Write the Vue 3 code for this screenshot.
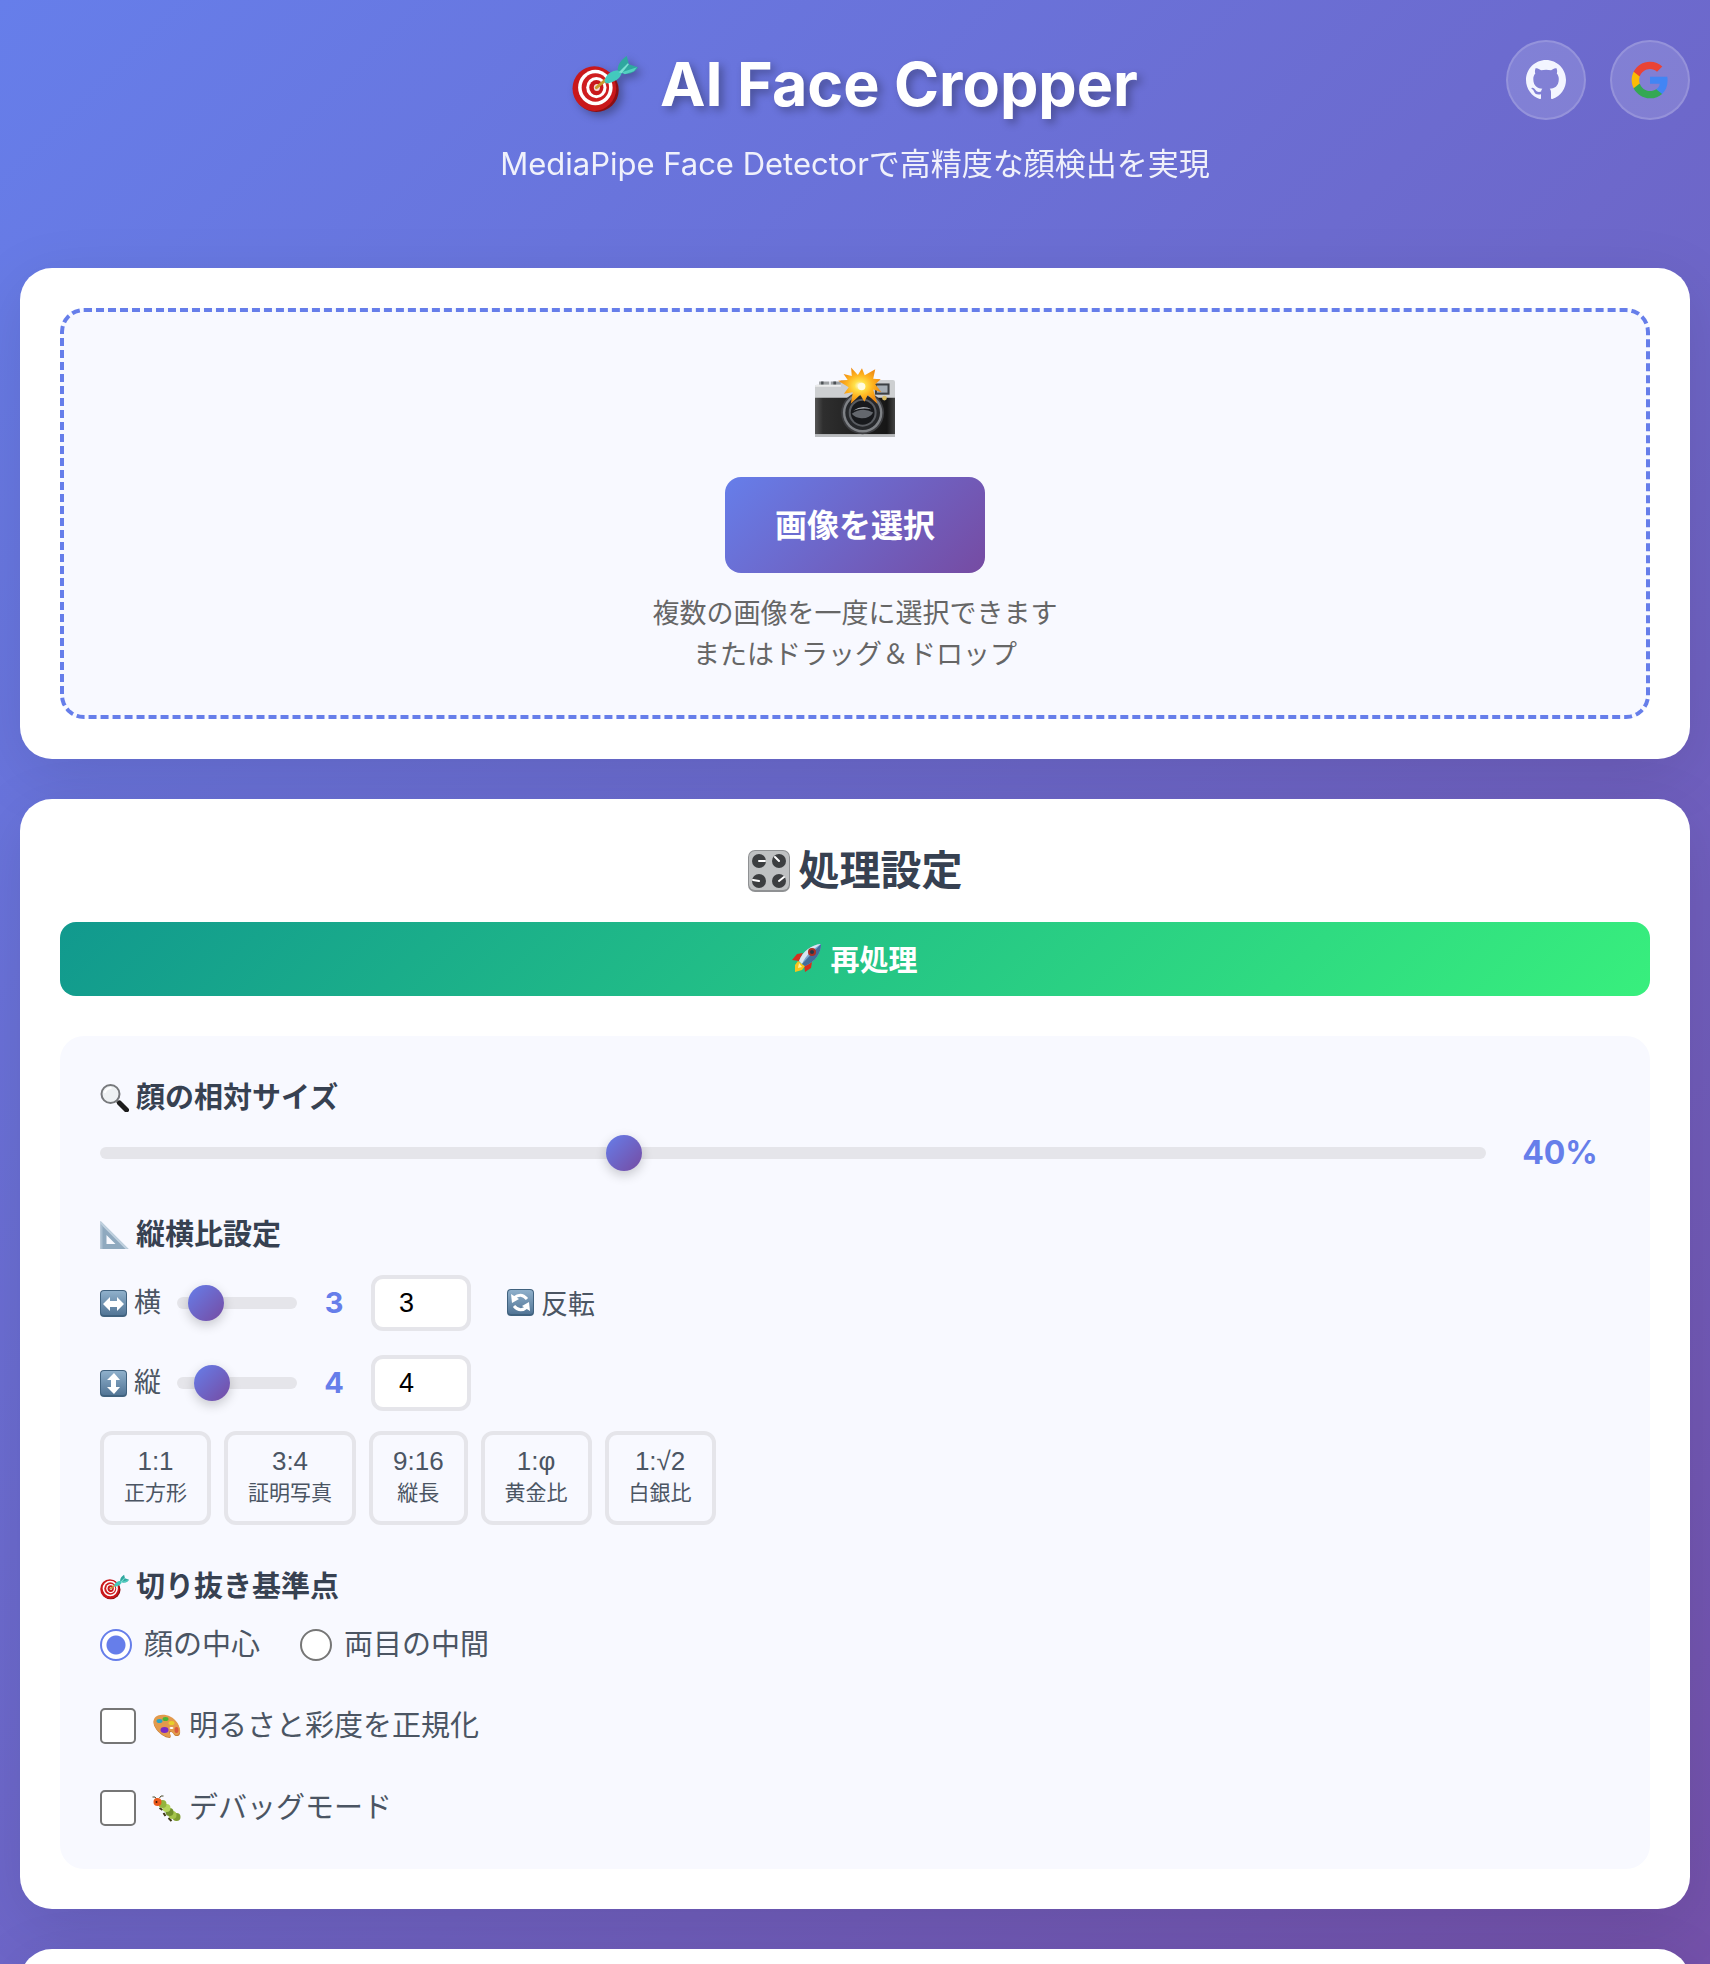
<script setup>
import { ref } from 'vue'

const faceSize = ref(40)
const ratioW = ref(3)
const ratioH = ref(4)
const anchor = ref('center')
const normalize = ref(false)
const debug = ref(false)

const presets = [
  { ratio: '1:1', name: '正方形', w: 1, h: 1 },
  { ratio: '3:4', name: '証明写真', w: 3, h: 4 },
  { ratio: '9:16', name: '縦長', w: 9, h: 16 },
  { ratio: '1:φ', name: '黄金比', w: 1, h: 1.618 },
  { ratio: '1:√2', name: '白銀比', w: 1, h: 1.414 },
]

function applyPreset(p) {
  ratioW.value = p.w
  ratioH.value = p.h
}

function swap() {
  const w = ratioW.value
  ratioW.value = ratioH.value
  ratioH.value = w
}
</script>

<template>
  <svg class="sprite" width="0" height="0" aria-hidden="true">
    <defs>
      <linearGradient id="key" x1="0" y1="0" x2="0" y2="1">
        <stop offset="0" stop-color="#8fb0cb" />
        <stop offset="1" stop-color="#527596" />
      </linearGradient>
      <symbol id="target" viewBox="0 0 65 55">
        <ellipse cx="24" cy="33.500" rx="22" ry="21.500" fill="#8c0f12" />
        <ellipse cx="22" cy="32" rx="21.500" ry="22" fill="#c9181b" />
        <ellipse cx="23" cy="31" rx="17" ry="17.500" fill="#fff" />
        <ellipse cx="23" cy="31" rx="13.500" ry="14" fill="#cf1d1f" />
        <ellipse cx="24" cy="31" rx="10" ry="10.500" fill="#fff" />
        <ellipse cx="24" cy="31" rx="7" ry="7.500" fill="#c9181b" />
        <ellipse cx="24.500" cy="31" rx="3" ry="3.500" fill="#f3d9d6" />
        <path d="M24 31 35 22" stroke="#c99b2c" stroke-width="3" stroke-linecap="round" />
        <path d="M32 25c1-7 7-11 14-11l3 2c-1 6-7 10-15 11z" fill="#43c9bd" />
        <path d="M45 14C45 8 49 3 54 0l2 8 9 3c-3 5-9 8-16 6z" fill="#2fa79f" />
        <path d="m46 16 9-9 1 1-7 9z" fill="#7be0d3" />
        <path d="m49 16 15-5-3 4-9 3z" fill="#55cfc2" />
      </symbol>
    </defs>
  </svg>

  <div class="page">
    <header class="hero">
      <div class="heading">
        <h1>
          <svg class="hero-icon" aria-hidden="true"><use href="#target" /></svg>
          <span>AI Face Cropper</span>
        </h1>
        <p>MediaPipe Face Detectorで高精度な顔検出を実現</p>
      </div>
      <nav class="links">
        <a href="#github" aria-label="GitHub">
          <svg viewBox="0 0 16 16" fill="#f3f5ff">
            <path d="M8 0C3.580 0 0 3.580 0 8c0 3.540 2.290 6.530 5.470 7.590.4.070.55-.17.55-.38 0-.19-.01-.82-.01-1.490-2.010.37-2.530-.49-2.690-.94-.09-.23-.48-.94-.82-1.130-.28-.15-.68-.52-.01-.53.63-.01 1.080.58 1.230.82.72 1.210 1.870.87 2.330.66.07-.52.28-.87.51-1.070-1.780-.2-3.640-.89-3.640-3.950 0-.87.31-1.590.82-2.150-.08-.2-.36-1.020.08-2.120 0 0 .67-.21 2.200.82.64-.18 1.320-.27 2-.27s1.360.09 2 .27c1.530-1.040 2.200-.82 2.200-.82.44 1.100.16 1.920.08 2.120.51.56.82 1.270.82 2.150 0 3.070-1.870 3.750-3.650 3.950.29.25.54.73.54 1.480 0 1.070-.01 1.930-.01 2.200 0 .21.15.46.55.38A8.010 8.010 0 0 0 16 8c0-4.420-3.580-8-8-8z" />
          </svg>
        </a>
        <a href="#google" aria-label="Google">
          <svg viewBox="0 0 24 24">
            <path fill="#4285f4" d="M22.560 12.250c0-.78-.07-1.530-.2-2.250H12v4.260h5.920c-.26 1.370-1.040 2.530-2.210 3.310v2.770h3.570c2.080-1.920 3.280-4.740 3.280-8.090z" />
            <path fill="#34a853" d="M12 23c2.970 0 5.460-.98 7.280-2.660l-3.570-2.770c-.98.66-2.230 1.060-3.710 1.060-2.860 0-5.290-1.930-6.160-4.530H2.180v2.840C3.990 20.530 7.700 23 12 23z" />
            <path fill="#fbbc05" d="M5.840 14.090c-.22-.66-.35-1.360-.35-2.090s.13-1.430.35-2.090V7.070H2.180C1.430 8.550 1 10.220 1 12s.43 3.450 1.180 4.930l3.660-2.840z" />
            <path fill="#ea4335" d="M12 5.380c1.620 0 3.060.56 4.210 1.640l3.150-3.150C17.450 2.090 14.970 1 12 1 7.700 1 3.990 3.470 2.180 7.070l3.660 2.840c.87-2.600 3.300-4.530 6.160-4.530z" />
          </svg>
        </a>
      </nav>
    </header>

    <main>
      <section class="card">
        <div class="dropzone">
          <svg class="camera" viewBox="0 0 235 205" aria-hidden="true">
            <defs>
              <linearGradient id="body" x1="0" x2="1" y1="0" y2="0">
                <stop offset="0" stop-color="#555" />
                <stop offset=".1" stop-color="#2e2e2e" />
                <stop offset=".9" stop-color="#161616" />
                <stop offset="1" stop-color="#444" />
              </linearGradient>
              <radialGradient id="burst" cx=".5" cy=".5" r=".5">
                <stop offset="0" stop-color="#fff" />
                <stop offset=".25" stop-color="#ffe14a" />
                <stop offset=".6" stop-color="#ffb41f" />
                <stop offset="1" stop-color="#ef8a12" />
              </radialGradient>
            </defs>
            <path d="M12 42h30v14H12zM46 42h30v14H46z" fill="#9da0a3" />
            <path d="M18 42h7v14h-7zM54 42h8v14h-8z" fill="#4c5054" />
            <path d="M0 58q0-6 6-6h70V38h153q6 0 6 6v50H0z" fill="#cdcfd1" />
            <path d="M0 58q0-6 6-6h70v6z" fill="#eceded" />
            <path d="M0 90h235v108H0z" fill="url(#body)" />
            <path d="M0 197h235v8H0z" fill="#b9bbbe" />
            <rect x="176" y="48" width="43" height="33" fill="#3c4044" />
            <rect x="182" y="54" width="31" height="21" fill="#a5adb4" />
            <circle cx="204" cy="91" r="7" fill="#d9bd63" />
            <circle cx="140" cy="134" r="63" fill="#3c3d40" />
            <circle cx="140" cy="134" r="58" fill="#7f8286" />
            <circle cx="140" cy="134" r="51" fill="#26282b" />
            <circle cx="140" cy="134" r="41" fill="#595c61" />
            <circle cx="140" cy="134" r="35" fill="#17191c" />
            <path d="M108 137q30-22 63-4-10 18-35 17-18-1-28-13z" fill="#63676d" />
            <path d="M112 128q26-19 54-4-28-6-54 4z" fill="#a4a8ae" />
            <path d="m106 1 20 22 12-20 8 21 31-18-6 28 22 2-16 14 18 24-24-8 12 42-28-26-10 20-12-21-28 27 6-34-26 4 14-19-31-19 28-2-12-18 24 6z" fill="url(#burst)" />
            <circle cx="137" cy="57" r="11" fill="#fffbe0" />
          </svg>
          <button type="button" class="pick">画像を選択</button>
          <p>複数の画像を一度に選択できます<br />またはドラッグ＆ドロップ</p>
        </div>
      </section>

      <section class="card">
        <h2>
          <svg viewBox="0 0 42 42" aria-hidden="true">
            <rect width="42" height="42" rx="7" fill="#8f9193" />
            <rect x="1" y="1" width="40" height="39" rx="6" fill="#bfc1c2" />
            <g fill="#3c3e40">
              <circle cx="11" cy="11" r="7" /><circle cx="31" cy="11" r="7" />
              <circle cx="11" cy="31" r="7" /><circle cx="31" cy="31" r="7" />
            </g>
            <path d="M11 11h6M31 11l-4-4M11 31l-6-1M31 31l5-4" stroke="#fff" stroke-width="2" stroke-linecap="round" />
          </svg>
          <span>処理設定</span>
        </h2>
        <button type="button" class="run">
          <svg viewBox="0 0 30 28" aria-hidden="true">
            <path d="m11 9-6 1-5 6 7 1z" fill="#d5301f" />
            <path d="m20 18-1 6-6 4-1-8z" fill="#d5301f" />
            <path d="M6 17 3 21l0 7 7-2 3-4z" fill="#f7c51e" />
            <path d="m7 19-1 5 4-1z" fill="#fff3a0" />
            <path d="M7 17C11 7 19 1 29 0c0 9-5 17-16 22z" fill="#7ba6cf" />
            <path d="M7 17C11 7 19 1 29 0 21 5 14 11 10 20z" fill="#d8e6f1" />
            <path d="m10 20 19-20c0 9-5 17-16 22z" fill="#426d9c" />
            <circle cx="20" cy="8" r="4" fill="#a83024" />
            <circle cx="20" cy="8" r="2" fill="#27364a" />
          </svg>
          <span>再処理</span>
        </button>

        <div class="panel">
          <div class="group">
            <label class="label" for="face-size">
              <svg viewBox="0 0 28 28" aria-hidden="true">
                <path d="m16 17 4 3" stroke="#888" stroke-width="3" />
                <path d="m19 19 7 7" stroke="#1c1c1c" stroke-width="5" stroke-linecap="round" />
                <circle cx="10" cy="10" r="9" fill="#eef1f3" stroke="#77797c" stroke-width="2" />
                <path d="M4 9q2-5 7-5" fill="none" stroke="#fff" stroke-width="2" />
              </svg>
              <span>顔の相対サイズ</span>
            </label>
            <div class="slider-row">
              <input id="face-size" v-model.number="faceSize" type="range" min="10" max="90" />
              <output for="face-size" class="percent">{{ faceSize }}%</output>
            </div>
          </div>

          <div class="group">
            <h3 class="label">
              <svg viewBox="0 0 28 28" aria-hidden="true">
                <path fill-rule="evenodd" d="M0 0 28 28H0zM6 14v9h9z" fill="#8fa9bf" />
                <path d="M0 0 28 28h-3L0 3z" fill="#bfd0de" />
                <path d="M0 3v25h2V5z" fill="#a9bed0" />
              </svg>
              <span>縦横比設定</span>
            </h3>
            <div class="ratio-row">
              <label for="ratio-w">
                <svg viewBox="0 0 27 27" aria-hidden="true">
                  <rect width="27" height="27" rx="4" fill="#40627f" />
                  <rect x="1" y="1" width="25" height="24" rx="3" fill="url(#key)" />
                  <path d="m3 14 7-7v4h7V7l7 7-7 7v-4h-7v4z" fill="#fff" />
                </svg>
                <span>横</span>
              </label>
              <input id="ratio-w" v-model.number="ratioW" type="range" min="1" max="16" />
              <output for="ratio-w">{{ ratioW }}</output>
              <input v-model.number="ratioW" type="number" aria-label="横" />
              <button type="button" class="swap" @click="swap">
                <svg viewBox="0 0 27 27" aria-hidden="true">
                  <rect width="27" height="27" rx="4" fill="#40627f" />
                  <rect x="1" y="1" width="25" height="24" rx="3" fill="url(#key)" />
                  <path d="M7 9q7-6 13 1M20 18q-7 6-13-1" fill="none" stroke="#fff" stroke-width="3" />
                  <path d="m4 5 1 9 7-4zM23 22l-1-9-7 4z" fill="#fff" />
                </svg>
                <span>反転</span>
              </button>
            </div>
            <div class="ratio-row">
              <label for="ratio-h">
                <svg viewBox="0 0 27 27" aria-hidden="true">
                  <rect width="27" height="27" rx="4" fill="#40627f" />
                  <rect x="1" y="1" width="25" height="24" rx="3" fill="url(#key)" />
                  <path d="m14 3 6 7h-4v7h4l-6 7-7-7h4v-7H7z" fill="#fff" />
                </svg>
                <span>縦</span>
              </label>
              <input id="ratio-h" v-model.number="ratioH" type="range" min="1" max="16" />
              <output for="ratio-h">{{ ratioH }}</output>
              <input v-model.number="ratioH" type="number" aria-label="縦" />
            </div>
            <div class="presets">
              <button v-for="p in presets" :key="p.ratio" type="button" @click="applyPreset(p)">
                {{ p.ratio }}<small>{{ p.name }}</small>
              </button>
            </div>
          </div>

          <div class="group">
            <h3 class="label">
              <svg aria-hidden="true"><use href="#target" /></svg>
              <span>切り抜き基準点</span>
            </h3>
            <div class="radios">
              <label><input v-model="anchor" type="radio" name="anchor" value="center" />顔の中心</label>
              <label><input v-model="anchor" type="radio" name="anchor" value="eyes" />両目の中間</label>
            </div>
          </div>

          <label class="check">
            <input v-model="normalize" type="checkbox" />
            <svg viewBox="0 0 28 28" aria-hidden="true">
              <path d="M3 6C8 2 19 3 25 12c4 7 3 12 0 12-4 1-4-5-7-4-2 1 2 5-1 6C10 26-4 13 3 6z" fill="#c67d35" />
              <path d="M3 5C8 1 19 2 25 11c4 7 3 11 0 12-4 1-5-5-8-4-2 1 3 5 0 6C10 26-4 12 3 5z" fill="#e29a4c" />
              <ellipse cx="7" cy="9" rx="3" ry="2" fill="#2aa4c4" />
              <ellipse cx="13" cy="7" rx="3" ry="2" fill="#47b535" />
              <ellipse cx="19" cy="11" rx="3" ry="2" fill="#e8cf2b" />
              <ellipse cx="12" cy="18" rx="4" ry="3" fill="#7a2bc4" />
              <ellipse cx="24" cy="18" rx="2" ry="3" fill="#d8583e" />
              <ellipse cx="19" cy="16" rx="2" ry="1" fill="#fff" />
            </svg>
            <span>明るさと彩度を正規化</span>
          </label>
          <label class="check">
            <input v-model="debug" type="checkbox" />
            <svg viewBox="0 0 28 28" aria-hidden="true">
              <path d="M4 5Q3 2 0 3M7 4q1-3 4-2" fill="none" stroke="#4b4a2a" stroke-width="1" />
              <path d="m7 14 3 2M11 19l2 3M16 24l3 3" stroke="#3c3417" stroke-width="2" />
              <circle cx="24" cy="23" r="4" fill="#7f9e31" />
              <circle cx="20" cy="21" r="4" fill="#a4c44b" />
              <circle cx="17" cy="18" r="4" fill="#71902c" />
              <circle cx="14" cy="14" r="4" fill="#b4d35b" />
              <circle cx="10" cy="10" r="4" fill="#93b33e" />
              <circle cx="5" cy="8" r="4" fill="#ec5a1c" />
              <circle cx="4" cy="8" r="1" fill="#3b1608" />
            </svg>
            <span>デバッグモード</span>
          </label>
        </div>
      </section>

      <section class="card results"></section>
    </main>
  </div>
</template>

<style>
body {
  margin: 0;
}
</style>

<style scoped>
* {
  box-sizing: border-box;
}

.sprite {
  position: absolute;
}

.page {
  height: 100vh;
  overflow: hidden;
  padding: 0 20px;
  background: linear-gradient(135deg, #667eea 0%, #764ba2 100%) 0 0 / 100% 125%;
  color: #374151;
  font-family: Inter, "Noto Sans CJK JP", sans-serif;
  font-size: 29px;
  line-height: 40px;
}

h1, h2, h3, p {
  margin: 0;
}

button, input {
  font-family: inherit;
}

button {
  cursor: pointer;
}

svg {
  flex: none;
  display: block;
}

.hero {
  display: grid;
  grid-template-columns: 1fr auto 1fr;
  align-items: start;
  padding: 40px 0 80px;
}

.heading {
  grid-column: 2;
  text-align: center;
  color: #fff;
}

h1 {
  display: flex;
  justify-content: center;
  align-items: center;
  gap: 22px;
  height: 88px;
  font-size: 61px;
  line-height: 88px;
  font-weight: 700;
  text-shadow: 4px 4px 8px rgba(0, 0, 0, 0.3);
}

.hero-icon {
  width: 66px;
  height: 56px;
  filter: drop-shadow(4px 4px 4px rgba(0, 0, 0, 0.3));
}

.heading p {
  margin-top: 12px;
  font-size: 31px;
  line-height: 48px;
  opacity: 0.9;
}

.links {
  display: flex;
  justify-content: flex-end;
  gap: 24px;
}

.links a {
  display: grid;
  place-items: center;
  width: 80px;
  height: 80px;
  border: 2px solid rgba(255, 255, 255, 0.15);
  border-radius: 50%;
  background: rgba(255, 255, 255, 0.15);
}

.links svg {
  width: 40px;
  height: 40px;
}

main {
  display: flex;
  flex-direction: column;
  gap: 40px;
}

.card {
  padding: 40px;
  border-radius: 32px;
  background: #fff;
  box-shadow: 0 16px 64px rgba(0, 0, 0, 0.1);
}

.results {
  min-height: 400px;
}

.dropzone {
  display: flex;
  flex-direction: column;
  align-items: center;
  padding: 55px 40px 40px;
  border: 4px dashed #667eea;
  border-radius: 24px;
  background: #f8f9ff;
}

.camera {
  width: 80px;
  height: 70px;
}

.pick {
  height: 96px;
  margin: 40px 0 20px;
  padding: 0 50px 4px;
  border: 0;
  border-radius: 16px;
  background: linear-gradient(135deg, #667eea, #764ba2);
  color: #fff;
  font-size: 32px;
  font-weight: 700;
}

.dropzone p {
  color: #666;
  font-size: 27px;
  line-height: 41px;
  text-align: center;
}

h2 {
  display: flex;
  justify-content: center;
  align-items: center;
  gap: 9px;
  margin-bottom: 20px;
  font-size: 41px;
  line-height: 63px;
  font-weight: 700;
}

h2 svg {
  width: 42px;
  height: 42px;
}

.run {
  display: flex;
  justify-content: center;
  align-items: center;
  gap: 8px;
  width: 100%;
  height: 74px;
  margin-bottom: 40px;
  padding: 0 0 2px;
  border: 0;
  border-radius: 16px;
  background: linear-gradient(135deg, #11998e, #38ef7d);
  color: #fff;
  font-size: 29px;
  font-weight: 700;
}

.run svg {
  width: 30px;
  height: 28px;
}

.panel {
  display: flex;
  flex-direction: column;
  gap: 40px;
  padding: 40px;
  border-radius: 24px;
  background: #f8f9ff;
}

.label {
  display: flex;
  align-items: center;
  gap: 7px;
  font-size: 29px;
  line-height: 43px;
  font-weight: 700;
}

.label svg {
  width: 29px;
  height: 28px;
}

.slider-row {
  display: flex;
  align-items: center;
  gap: 24px;
  height: 40px;
  margin-top: 14px;
}

.slider-row input {
  flex: 1;
}

output {
  color: #667eea;
  font-weight: 700;
  text-align: center;
}

.percent {
  width: 100px;
  font-size: 32px;
}

input[type="range"] {
  appearance: none;
  height: 12px;
  margin: 0;
  border-radius: 6px;
  background: #e5e5ea;
}

input[type="range"]::-webkit-slider-thumb {
  appearance: none;
  width: 36px;
  height: 36px;
  border-radius: 50%;
  background: linear-gradient(135deg, #667eea, #764ba2);
  box-shadow: 0 4px 12px rgba(0, 0, 0, 0.2);
}

.ratio-row {
  display: flex;
  align-items: center;
  height: 56px;
  margin: 19px 0 24px;
  color: #4b5563;
  font-size: 27px;
}

.ratio-row + .ratio-row {
  margin-bottom: 20px;
}

.ratio-row label,
.swap {
  display: flex;
  align-items: center;
  gap: 7px;
}

.ratio-row svg {
  width: 27px;
  height: 27px;
}

.ratio-row input[type="range"] {
  width: 120px;
  margin: 0 12px 0 16px;
}

.ratio-row output {
  width: 50px;
  font-size: 29px;
}

.ratio-row input[type="number"] {
  width: 100px;
  height: 56px;
  margin-left: 12px;
  padding: 0 0 0 24px;
  border: 4px solid #e5e5ea;
  border-radius: 12px;
  background: #fff;
  color: #000;
  font-family: "Liberation Sans", sans-serif;
  font-size: 27px;
}

.swap {
  margin-left: 36px;
  padding: 0 0 2px;
  border: 0;
  background: none;
  color: #4b5563;
  font-size: 27px;
}

.presets {
  display: flex;
  gap: 13px;
}

.presets button {
  height: 94px;
  padding: 0 20px 2px;
  border: 4px solid #e5e5ea;
  border-radius: 12px;
  background: #f8f9ff;
  color: #4b5563;
  font-family: "Liberation Sans", "Noto Sans CJK JP", sans-serif;
  font-size: 26px;
  line-height: 31px;
}

.presets small {
  display: block;
  font-size: 21px;
}

.radios {
  display: flex;
  gap: 40px;
  height: 41px;
  margin-top: 16px;
  color: #4b5563;
}

.radios label {
  display: flex;
  align-items: center;
  gap: 12px;
}

.radios input,
.check input {
  appearance: none;
  width: 32px;
  height: 32px;
  margin: 0;
  padding: 4px;
  border: 2px solid #767676;
  border-radius: 50%;
  background-color: #fff;
}

.radios input:checked {
  border-color: #667eea;
  background: radial-gradient(circle, #667eea 9px, #fff 10px);
}

.check {
  display: flex;
  align-items: center;
  gap: 8px;
  height: 42px;
  color: #4b5563;
}

.check input {
  width: 36px;
  height: 36px;
  margin-right: 8px;
  border-radius: 5px;
}

.check input:checked {
  border-color: #667eea;
  background: #667eea content-box;
}

.check svg {
  width: 29px;
  height: 28px;
}
</style>
